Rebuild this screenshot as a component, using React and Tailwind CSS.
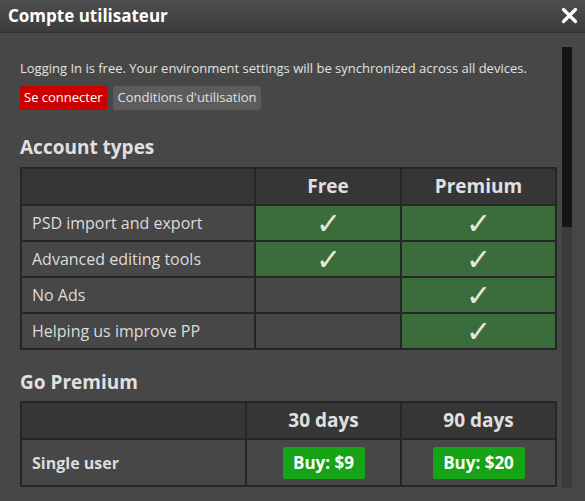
const FEATURES = [
  { label: 'PSD import and export', free: true, premium: true },
  { label: 'Advanced editing tools', free: true, premium: true },
  { label: 'No Ads', free: false, premium: true },
  { label: 'Helping us improve PP', free: false, premium: true },
];

function Check() {
  return <span className="text-[30px] leading-none text-[#e6ead8]">✓</span>;
}

export default function App() {
  return (
    <div
      className="w-[585px] h-[501px] overflow-hidden flex flex-col bg-[#474747] text-[#dedede]"
      style={{ fontFamily: '"Open Sans", "Liberation Sans", sans-serif' }}
    >
      <header className="h-[33px] shrink-0 flex items-center justify-between pl-2 pr-[7px] bg-gradient-to-b from-[#4e4e4e] to-[#3c3c3c] border-b border-[#333]">
        <h1 className="text-[17px] font-bold text-white">Compte utilisateur</h1>
        <svg width="17" height="17" viewBox="0 0 17 17" className="mt-[-2px]">
          <path d="M2.5 2.5 L14.5 14.5 M14.5 2.5 L2.5 14.5" stroke="#fff" strokeWidth="3.2" strokeLinecap="round" />
        </svg>
      </header>

      <div className="flex flex-1 min-h-0">
        <main className="w-[562px] shrink-0 pl-5 pr-[7px] pt-[26px]">
          <p className="text-[13px] leading-[18px] text-[#e2e2e2]">
            Logging In is free. Your environment settings will be synchronized across all devices.
          </p>
          <div className="flex gap-[6px] mt-[9px]">
            <button className="h-6 px-[4px] bg-[#cc0000] text-white text-[13px] rounded-[2px] whitespace-nowrap">Se connecter</button>
            <button className="h-6 px-[5px] bg-[#5c5c5c] text-[#e0e0e0] text-[13px] rounded-[2px] whitespace-nowrap">Conditions d'utilisation</button>
          </div>

          <h2 className="mt-[23px] mb-[6px] text-[19px] leading-[28px] font-bold text-[#e0e0e0]">Account types</h2>
          <table className="w-[535px] border-collapse border-2 border-[#262626] table-fixed">
            <colgroup>
              <col className="w-[234px]" />
              <col className="w-[146px]" />
              <col className="w-[155px]" />
            </colgroup>
            <thead>
              <tr className="h-[37px] bg-[#363636]">
                <th className="border-2 border-[#262626]"></th>
                <th className="border-2 border-[#262626] text-[19px] font-bold text-[#e0e0e0]">Free</th>
                <th className="border-2 border-[#262626] text-[19px] font-bold text-[#e0e0e0]">Premium</th>
              </tr>
            </thead>
            <tbody>
              {FEATURES.map((f) => (
                <tr key={f.label} className="h-[36px]">
                  <td className="border-2 border-[#262626] pl-[10px] text-[16px] leading-[20px] text-[#dcdcdc]">{f.label}</td>
                  <td className={`border-2 border-[#262626] text-center leading-none ${f.free ? 'bg-[#3b6d3c]' : ''}`}>{f.free && <Check />}</td>
                  <td className={`border-2 border-[#262626] text-center leading-none ${f.premium ? 'bg-[#3b6d3c]' : ''}`}>{f.premium && <Check />}</td>
                </tr>
              ))}
            </tbody>
          </table>

          <h2 className="mt-[18px] mb-[5px] text-[19px] leading-[28px] font-bold text-[#e0e0e0]">Go Premium</h2>
          <table className="w-[535px] border-collapse border-2 border-[#262626] table-fixed">
            <colgroup>
              <col className="w-[225px]" />
              <col className="w-[155px]" />
              <col className="w-[155px]" />
            </colgroup>
            <thead>
              <tr className="h-[37px] bg-[#363636]">
                <th className="border-2 border-[#262626]"></th>
                <th className="border-2 border-[#262626] text-[19px] font-bold text-[#e0e0e0]">30 days</th>
                <th className="border-2 border-[#262626] text-[19px] font-bold text-[#e0e0e0]">90 days</th>
              </tr>
            </thead>
            <tbody>
              <tr className="h-[47px]">
                <td className="border-2 border-[#262626] pl-[10px] text-[16px] font-bold text-[#dcdcdc]">Single user</td>
                <td className="border-2 border-[#262626] text-center">
                  <button className="h-8 w-[82px] bg-[#16a316] text-white text-[17px] font-bold rounded-[2px]">Buy: $9</button>
                </td>
                <td className="border-2 border-[#262626] text-center">
                  <button className="h-8 w-[92px] bg-[#16a316] text-white text-[17px] font-bold rounded-[2px]">Buy: $20</button>
                </td>
              </tr>
            </tbody>
          </table>
        </main>

        <div className="w-[10px] shrink-0 mt-[14px] h-[441px] bg-[#3b3b3b] flex flex-col">
          <div className="h-[180px] bg-[#151515]"></div>
        </div>
      </div>
    </div>
  );
}
